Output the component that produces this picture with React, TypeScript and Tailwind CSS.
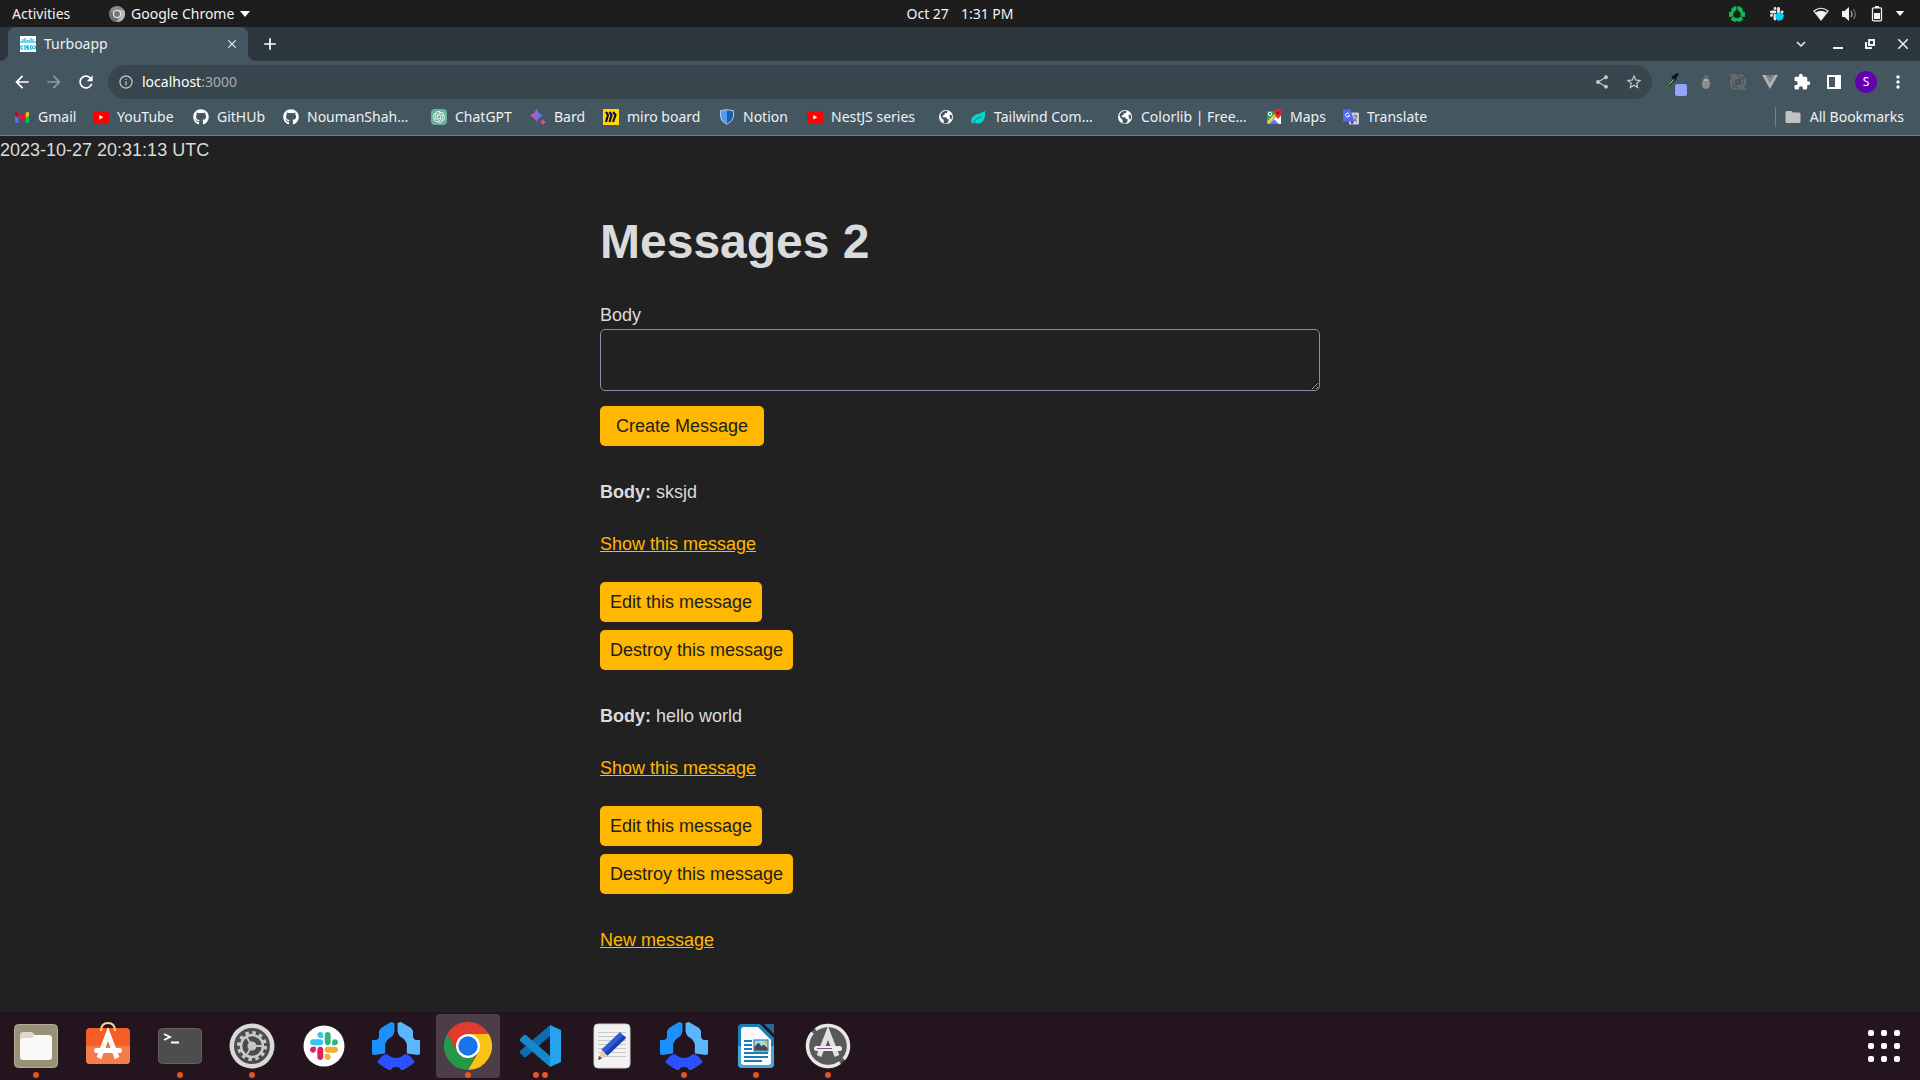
import React from "react";
import { FaGithub } from "react-icons/fa";
import { SiOpenai } from "react-icons/si";
import { MdArrowBack, MdArrowForward, MdRefresh, MdClose, MdAdd, MdShare, MdStarBorder, MdExtension, MdMoreVert, MdKeyboardArrowDown, MdOutlineInfo, MdFolder } from "react-icons/md";

type P = { className?: string };

const SLACK = [
  ["#36C5F0", "M45.2 25.8c-7.1 0-12.9-5.8-12.9-12.9S38.1 0 45.2 0s12.9 5.8 12.9 12.9v12.9H45.2zM45.2 32.3c7.1 0 12.9 5.8 12.9 12.9s-5.8 12.9-12.9 12.9H12.9C5.8 58.1 0 52.3 0 45.2s5.8-12.9 12.9-12.9h32.3z"],
  ["#2EB67D", "M97 45.2c0-7.1 5.8-12.9 12.9-12.9s12.9 5.8 12.9 12.9-5.8 12.9-12.9 12.9H97V45.2zM90.5 45.2c0 7.1-5.8 12.9-12.9 12.9s-12.9-5.8-12.9-12.9V12.9C64.7 5.8 70.5 0 77.6 0s12.9 5.8 12.9 12.9v32.3z"],
  ["#ECB22E", "M77.6 97c7.1 0 12.9 5.8 12.9 12.9s-5.8 12.9-12.9 12.9-12.9-5.8-12.9-12.9V97h12.9zM77.6 90.5c-7.1 0-12.9-5.8-12.9-12.9s5.8-12.9 12.9-12.9h32.3c7.1 0 12.9 5.8 12.9 12.9s-5.8 12.9-12.9 12.9H77.6z"],
  ["#E01E5A", "M25.8 77.6c0 7.1-5.8 12.9-12.9 12.9S0 84.7 0 77.6s5.8-12.9 12.9-12.9h12.9v12.9zM32.3 77.6c0-7.1 5.8-12.9 12.9-12.9s12.9 5.8 12.9 12.9v32.3c0 7.1-5.8 12.9-12.9 12.9s-12.9-5.8-12.9-12.9V77.6z"],
];

function HubRing({ className, colors }: P & { colors: [string, string, string] }) {
  return (
    <svg viewBox="0 0 48 48" className={className}>
      <path fill={colors[0]} d="M19 0l3.500 1v8q-.5 4-2.500 5.500a12 12 0 0 0-7 9q.5 5 0 8L2 33l-2-1V18h4q3-1 3-4V9l2-3z" />
      <path fill={colors[1]} d="M29 0l-3.500 1v8q.5 4 2.500 5.500a12 12 0 0 1 7 9q-.5 5 0 8L46 33l2-1V18h-4q-3-1-3-4V9l-2-3z" />
      <path fill={colors[2]} d="M5 40l5-6 4-2q2 0 3 1.500a11 11 0 0 0 14 0q1-1.500 3-1.500l4 2 5 6-5 4-7 4h-2q-1-3-5-3t-5 3h-2l-7-4z" />
    </svg>
  );
}

const Gmail = ({ className }: P) => (
  <svg viewBox="0 0 16 16" className={className}>
    <path fill="#5c6cf5" d="M1 5l3.500 2.500V14H2a1 1 0 0 1-1-1z" />
    <path fill="#16b364" d="M15 5l-3.500 2.500V14H14a1 1 0 0 0 1-1z" />
    <path fill="#fbbc04" d="M11.500 4.500L13 3a1.300 1.300 0 0 1 2 1v2.500L11.500 9z" />
    <path fill="#b3131f" d="M1 4a1.300 1.300 0 0 1 2-1l1.500 1.500V9L1 6.500z" />
    <path fill="#f0142f" d="M4.500 4.300L8 7l3.500-2.700V9L8 11.500 4.500 9z" />
  </svg>
);
const YouTube = ({ className }: P) => (
  <svg viewBox="0 0 16 16" className={className}>
    <rect y="2.500" width="16" height="11.500" rx="2" fill="#f00" />
    <path fill="#fff" d="M6.300 6v4.500l4-2.250z" />
  </svg>
);
const ChatGpt = ({ className }: P) => (
  <span className={`${className} flex items-center justify-center rounded-sm bg-[#6fb09d]`}>
    <SiOpenai className="size-3 text-white" />
  </span>
);
const Bard = ({ className }: P) => (
  <svg viewBox="0 0 16 16" className={className}>
    <defs>
      <linearGradient id="bard" x1="0" x2="1">
        <stop offset="0" stopColor="#f0574f" /><stop offset=".35" stopColor="#a55fd0" /><stop offset="1" stopColor="#2f8bf0" />
      </linearGradient>
    </defs>
    <path fill="url(#bard)" d="M6.500 0Q8.500 4.500 13 6.500 8.500 8.500 6.500 13 4.500 8.500 0 6.500 4.500 4.500 6.500 0z" />
    <path fill="#d9518c" d="M13 10q.8 2.200 3 3-2.200.8-3 3-.8-2.200-3-3 2.200-.8 3-3z" />
  </svg>
);
const Miro = ({ className }: P) => (
  <svg viewBox="0 0 16 16" className={className}>
    <rect width="16" height="16" fill="#ffd900" />
    <path fill="none" stroke="#120838" strokeWidth="2.200" d="M3 3l2 3-2 7M6.500 3l2 3-2 7M10 3l2.500 3-2.500 7" />
  </svg>
);
const Shield = ({ className }: P) => (
  <svg viewBox="0 0 16 16" className={className}>
    <path fill="#4f9cf0" d="M8 .5L1 1.500v6q.5 5 7 8z" />
    <path fill="#1f5fa8" d="M8 .5l7 1v6q-.5 5-7 8z" />
    <path fill="none" stroke="#b9cbdc" d="M8 .7l6.500 1v6q-.5 4.500-6.500 7.500-6-3-6.500-7.500v-6z" />
  </svg>
);
const Globe = ({ className }: P) => (
  <svg viewBox="0 0 16 16" className={className}>
    <circle cx="8" cy="8" r="7" fill="#fff" />
    <path fill="#44555f" d="M2.500 6.500q0-2.500 3-4 2-1 4-.6l-.5 2-2.500.6v1.600l-2 .6.500 1.500h2.500q1.500.2 1.500 1.800h1.500v2.500l-2 2q-2 .2-2.800-.5v-3L3.500 9zM11.500 5.500l2.300.7q.6 2-.3 4.300l-1.500-.8z" />
  </svg>
);
const Leaf = ({ className }: P) => (
  <svg viewBox="0 0 16 16" className={className}>
    <path fill="#06d6d0" d="M15 2q1 12-7 12.500-2 .2-4-1L2.500 15l-1-1Q0 8 6 5.500 11 4.500 15 2z" />
    <path fill="none" stroke="#34706f" d="M2.500 14Q6 9.500 11 7.500" />
  </svg>
);
const Maps = ({ className }: P) => (
  <svg viewBox="0 0 16 16" className={className}>
    <rect x="1" y="2" width="14" height="13" rx="1" fill="#1ea560" />
    <path fill="#fff" d="M2 15L12.500 5 15 7v8z" />
    <path fill="#5b7cfa" d="M3 15l5-5 5 5z" />
    <path fill="#ffd23e" d="M1 12.500l9-9 1.500 1.500L2 14.500z" />
    <circle cx="4" cy="5" r="1.700" fill="none" stroke="#fff" />
    <path fill="#e8262d" d="M12 0a3.700 3.700 0 0 1 3.700 3.700Q15.500 6 12 10 8.500 6 8.300 3.700A3.700 3.700 0 0 1 12 0z" />
    <circle cx="12" cy="3.700" r="1.300" fill="#8c1015" />
  </svg>
);
const Translate = ({ className }: P) => (
  <svg viewBox="0 0 16 16" className={className}>
    <rect x="6" y="3.500" width="10" height="12" rx="1" fill="#c9ced4" />
    <path fill="none" stroke="#68737d" d="M9.500 7h5M12 6v1M10.500 12.500q3-2 3-5.500M10.500 9q1 2.500 3.500 3.500" />
    <path fill="#5468f5" d="M1 .5h6.500L11 12.500H1a1 1 0 0 1-1-1v-10a1 1 0 0 1 1-1z" />
    <path fill="#3b16c4" d="M7.500 12.500H11L9 15.500z" />
    <path fill="none" stroke="#fff" d="M6 4.700A2 2 0 1 0 6.500 6.500H4.800" />
  </svg>
);
const GitHub = ({ className }: P) => <FaGithub className={`${className} text-white`} />;

const bookmarks: { label: string; icon: React.FC<P>; width: string }[] = [
  { label: "Gmail", icon: Gmail, width: "w-[79px]" },
  { label: "YouTube", icon: YouTube, width: "w-[100px]" },
  { label: "GitHUb", icon: GitHub, width: "w-[90px]" },
  { label: "NoumanShah…", icon: GitHub, width: "w-[148px]" },
  { label: "ChatGPT", icon: ChatGpt, width: "w-[99px]" },
  { label: "Bard", icon: Bard, width: "w-[73px]" },
  { label: "miro board", icon: Miro, width: "w-[116px]" },
  { label: "Notion", icon: Shield, width: "w-[88px]" },
  { label: "NestJS series", icon: YouTube, width: "w-[131px]" },
  { label: "", icon: Globe, width: "w-8" },
  { label: "Tailwind Com…", icon: Leaf, width: "w-[147px]" },
  { label: "Colorlib | Free…", icon: Globe, width: "w-[149px]" },
  { label: "Maps", icon: Maps, width: "w-[77px]" },
  { label: "Translate", icon: Translate, width: "w-[104px]" },
];

function TopBar() {
  return (
    <header className="grid h-[27px] shrink-0 grid-cols-[1fr_auto_1fr] items-center bg-[#1d1d1d] px-3 text-sm text-[#f2f2f2]">
      <div className="flex items-center">
        <button className="w-[97px] text-left">Activities</button>
        <button className="flex items-center gap-1.5">
          <svg viewBox="0 0 16 16" className="size-4">
            <circle cx="8" cy="8" r="8" fill="#8c8c8c" />
            <path fill="#b8b8b8" d="M8 4h7a8 8 0 0 1-7 12l4-6z" />
            <path fill="#6f6f6f" d="M1.500 4.500L5 10l3.500 2L7 16A8 8 0 0 1 1.500 4.500z" />
            <circle cx="8" cy="8" r="4" fill="#eee" />
            <circle cx="8" cy="8" r="3" fill="#777" />
          </svg>
          Google Chrome
          <svg viewBox="0 0 10 6" className="h-1.5 w-2.5"><path fill="#fff" d="M0 0h10L5 6z" /></svg>
        </button>
      </div>
      <div className="flex gap-3"><span>Oct 27</span><span>1:31 PM</span></div>
      <div className="flex items-center justify-end">
        <HubRing className="mr-6 size-4" colors={["#12b84f", "#12b84f", "#12b84f"]} />
        <svg viewBox="0 0 16 16" className="mr-7 size-4">
          <g transform="translate(1 1) scale(.11)">{SLACK.map(([c, d]) => <path key={c} fill="#e8e8e8" d={d} />)}</g>
          <circle cx="10.500" cy="10.500" r="4" fill="#00d0f5" />
        </svg>
        <svg viewBox="0 0 16 16" className="mr-3 size-4">
          <path fill="none" stroke="#eee" strokeWidth="1.200" d="M1 5q7-5.500 14 0L8 14z" />
          <path fill="#f2f2f2" d="M2.500 6.500q5.500-3.500 11 0L8 14z" />
        </svg>
        <svg viewBox="0 0 16 16" className="mr-3.5 size-4">
          <path fill="#f2f2f2" d="M1 5h2.500L8 1v14l-4.500-4H1z" />
          <path fill="none" stroke="#aaa" strokeWidth="1.200" d="M10 5q2 3 0 6" />
          <path fill="none" stroke="#777" strokeWidth="1.200" d="M12.500 3q3.500 5 0 10" />
        </svg>
        <svg viewBox="0 0 12 16" className="mr-3 h-4 w-3">
          <path fill="#f2f2f2" d="M4 0h4v2H4zM3 7h6v6H3z" />
          <rect x="1.500" y="1.800" width="9" height="13" rx="1" fill="none" stroke="#f2f2f2" strokeWidth="1.300" />
        </svg>
        <svg viewBox="0 0 10 6" className="mr-[3px] h-[5px] w-2.5"><path fill="#fff" d="M0 0h10L5 6z" /></svg>
      </div>
    </header>
  );
}

function TabStrip() {
  return (
    <div className="flex h-[34px] shrink-0 items-center bg-[#2b373d] text-[#eef1f2]">
      <span className="size-2 self-end bg-[#445761]"><span className="block size-2 rounded-br-lg bg-[#2b373d]" /></span>
      <div className="flex h-full w-60 items-center rounded-t-lg bg-[#445761] pr-2 pl-3 text-sm">
        <svg viewBox="0 0 16 16" className="mr-2 size-4">
          <rect width="16" height="16" fill="#fff" />
          <path stroke="#19b5e0" strokeWidth="1.200" d="M1 5v2M3 3v4M5 2v5M7 4v3M9 4v3M11 2v5M13 3v4M15 5v2" />
          <path fill="none" stroke="#19b5e0" strokeWidth="1.300" d="M3.200 9.800H2q-1.200 0-1.200 1.700T2 13.200h1.200M5 9v5M9 9.800H7.500q-1 0-1 .9t1 .8q1.200 0 1.200.9t-1 .8H6.500M12 9.800h-.6q-1 0-1 1.700t1 1.700h.6" />
          <circle cx="14" cy="11.500" r="1.500" fill="none" stroke="#19b5e0" strokeWidth="1.200" />
        </svg>
        <span className="flex-1">Turboapp</span>
        <button aria-label="Close tab" className="flex size-4 items-center justify-center"><MdClose className="size-3.5" /></button>
      </div>
      <span className="size-2 self-end bg-[#445761]"><span className="block size-2 rounded-bl-lg bg-[#2b373d]" /></span>
      <button aria-label="New tab" className="ml-1 text-white"><MdAdd className="size-5" /></button>
      <div className="ml-auto flex items-center gap-4 pr-2">
        <button aria-label="Search tabs" className="mr-1"><MdKeyboardArrowDown className="size-[18px]" /></button>
        <button aria-label="Minimize">
          <svg viewBox="0 0 16 16" className="size-4"><path fill="currentColor" d="M3 11h10v2H3z" /></svg>
        </button>
        <button aria-label="Restore">
          <svg viewBox="0 0 16 16" className="size-4"><path fill="none" stroke="currentColor" strokeWidth="2" d="M7 4h5v5H7zM4 6v6h6" /></svg>
        </button>
        <button aria-label="Close"><MdClose className="size-[18px]" /></button>
      </div>
    </div>
  );
}

const tool = "flex w-8 items-center justify-center";

function Toolbar() {
  return (
    <div className="flex h-[42px] shrink-0 items-center bg-[#445761] pr-1.5 pl-1.5 text-white">
      <div className="flex items-center">
        <button aria-label="Back" className={tool}><MdArrowBack className="size-5" /></button>
        <button aria-label="Forward" className={`${tool} text-[#8e9aa1]`}><MdArrowForward className="size-5" /></button>
        <button aria-label="Reload" className={tool}><MdRefresh className="size-5" /></button>
      </div>
      <div className="ml-1.5 flex h-[34px] flex-1 items-center rounded-full bg-[#38464d] pr-0.5 pl-2.5 text-sm">
        <MdOutlineInfo className="mr-2 size-4 text-[#b9c0c4]" />
        <button className="flex-1 text-left">localhost<span className="text-[#a4acb0]">:3000</span></button>
        <button aria-label="Share" className={`${tool} text-[#c3c8cb]`}><MdShare className="size-4" /></button>
        <button aria-label="Bookmark this tab" className={`${tool} text-[#c3c8cb]`}><MdStarBorder className="size-[18px]" /></button>
      </div>
      <div className="ml-1.5 flex items-center">
        <button aria-label="Color picker" className={tool}>
          <svg viewBox="0 0 20 20" className="size-5 overflow-visible">
            <path stroke="#10201a" strokeWidth="2.500" d="M8 4l4 4" />
            <path stroke="#111" strokeWidth="3" d="M10 6l3-3.500" strokeLinecap="round" />
            <path stroke="#1a3326" strokeWidth="2.500" d="M3 15l7-8" />
            <path stroke="#c9ddd2" strokeWidth="1" d="M5.500 12l4-4.500" />
            <path stroke="#14a04c" strokeWidth="1.500" d="M2.500 15.500l3-3.500" />
            <rect x="11" y="12" width="12" height="12" rx="2" fill="#93a5fb" />
          </svg>
        </button>
        <button aria-label="Bug reporter" className={tool}>
          <svg viewBox="0 0 20 20" className="size-5">
            <path fill="none" stroke="#5f6668" d="M5 7l10 8M15 7L5 15M4 11h12" />
            <ellipse cx="10" cy="5.500" rx="2.500" ry="2.500" fill="#6c6c6c" />
            <ellipse cx="10" cy="12" rx="4" ry="5" fill="#8e8e8e" />
            <path stroke="#bbb" strokeWidth="1.500" d="M7.500 8h5" />
          </svg>
        </button>
        <button aria-label="Refresh tools" className={tool}>
          <svg viewBox="0 0 20 20" className="size-5" fill="none" stroke="#6a6c6d" strokeWidth="2">
            <circle cx="10" cy="10" r="1.500" fill="#555" stroke="none" />
            <path strokeWidth="1.500" d="M6.500 12.500A4.300 4.300 0 0 1 12.500 6.500M13.500 7.500A4.300 4.300 0 0 1 7.500 13.500" />
            <path d="M4 14.500Q1 8 6 5L4 3.500h4.500V7M16 5.500Q19 12 14 15l2 1.500h-4.500V13M11 3q3 0 4.500 1.500M9 17q-3 0-4.500-1.500" />
          </svg>
        </button>
        <button aria-label="Vue devtools" className={tool}>
          <svg viewBox="0 0 20 20" className="size-5">
            <path fill="#b0b0b0" d="M2 3h4l4 7 4-7h4l-8 14z" /><path fill="#858585" d="M5.500 3H9l1 2 1-2h3.500L10 11z" />
          </svg>
        </button>
        <button aria-label="Extensions" className={tool}><MdExtension className="size-[18px]" /></button>
        <button aria-label="Side panel" className={tool}>
          <svg viewBox="0 0 16 16" className="size-4"><path fill="#fff" fillRule="evenodd" d="M1 1h14v14H1zM3 3v10h6V3z" /></svg>
        </button>
        <button className={tool} aria-label="Profile">
          <span className="flex size-[22px] items-center justify-center rounded-full bg-[#6200b0] text-xs">S</span>
        </button>
        <button aria-label="Menu" className={tool}><MdMoreVert className="size-5" /></button>
      </div>
    </div>
  );
}

function BookmarksBar() {
  return (
    <nav className="flex h-[33px] shrink-0 items-center border-b border-[#6d7d85] bg-[#445761] pb-1 pl-[14px] text-sm text-[#eef1f2]">
      {bookmarks.map(({ label, icon: Icon, width }, i) => (
        <a key={i} href="#" aria-label={label || "Website"} className={`${width} flex shrink-0 items-center gap-2 whitespace-nowrap`}>
          <Icon className="size-4 shrink-0" />
          {label}
        </a>
      ))}
      <a href="#" className="ml-auto flex items-center gap-2 pr-4">
        <span className="h-5 w-px bg-[#72818a]" />
        <MdFolder className="size-[18px] text-[#c2c2c2]" />
        All Bookmarks
      </a>
    </nav>
  );
}

const btn = "block h-10 rounded-[5px] bg-[#ffb700] text-[#212121]";
const link = "text-[#ffb700] underline";

function Message({ body }: { body: string }) {
  return (
    <article className="mb-8">
      <p className="mb-6"><strong>Body:</strong> {body}</p>
      <p className="mb-6"><a href="#" className={link}>Show this message</a></p>
      <button className={`${btn} mb-2 px-2.5`}>Edit this message</button>
      <button className={`${btn} px-2.5`}>Destroy this message</button>
    </article>
  );
}

function Page() {
  return (
    <main className="flex-1 bg-[#212121] font-['Liberation_Sans',Arial,sans-serif] text-lg/7 text-[#dbdbdb]">
      <p>2023-10-27 20:31:13 UTC</p>
      <div className="mx-auto mt-[50px] max-w-[720px]">
        <h1 className="mb-[31px] text-5xl/[56px] font-bold">Messages 2</h1>
        <form className="mb-8" onSubmit={(e) => e.preventDefault()}>
          <label htmlFor="body" className="block">Body</label>
          <textarea id="body" className="mb-[15px] block h-[62px] w-full resize rounded-[5px] border border-[#8d8aa5] bg-transparent px-2 py-1" />
          <button className={`${btn} px-4`}>Create Message</button>
        </form>
        <Message body="sksjd" />
        <Message body="hello world" />
        <a href="#" className={link}>New message</a>
      </div>
    </main>
  );
}

const Files = () => (
  <svg viewBox="0 0 48 48" className="size-12">
    <rect x="2.500" y="2.500" width="43" height="43" rx="4" fill="#989077" stroke="#b5ae99" />
    <path fill="#ddd8ca" d="M8 13q0-3 3-3h9l4 4v6H8z" />
    <path fill="#faf9f7" d="M8 19q0-3 3-3h9l3-3h14q3 0 3 3v19q0 3-3 3H11q-3 0-3-3z" />
  </svg>
);
const Software = () => (
  <svg viewBox="0 0 48 48" className="size-12">
    <rect x="2" y="6" width="44" height="36" rx="4" fill="#f45f27" />
    <path fill="#f77c4c" d="M2 24h44v14q0 4-4 4H6q-4 0-4-4z" />
    <path fill="none" stroke="#f5d5a0" strokeWidth="2" d="M17 9q0-8 7-8t7 8" />
    <path fill="none" stroke="#fff" strokeWidth="5" d="M15 36l9-24 9 24" />
    <rect x="10" y="26" width="28" height="5" rx="2.500" fill="#fff" />
  </svg>
);
const Terminal = () => (
  <svg viewBox="0 0 48 48" className="size-12">
    <rect x="2.500" y="6.500" width="43" height="35" rx="4" fill="#4d4d4d" stroke="#626262" />
    <path fill="none" stroke="#fff" strokeWidth="1.800" d="M8 12l6 3-6 3M15 20.500h8" />
  </svg>
);
const Settings = () => (
  <svg viewBox="0 0 48 48" className="size-12">
    <circle cx="24" cy="24" r="22.500" fill="#d9d9d9" />
    <circle cx="24" cy="24" r="18" fill="#4c4c4c" />
    <circle cx="24" cy="24" r="13.500" fill="none" stroke="#ccc" strokeWidth="3" strokeDasharray="3.500 3.568" />
    <circle cx="24" cy="24" r="11" fill="none" stroke="#ccc" strokeWidth="2.500" />
    <circle cx="24" cy="24" r="4.500" fill="#c6c6c6" />
    <path stroke="#c6c6c6" strokeWidth="2" d="M24 24h10M24 24l-5.500-9M24 24l-5.500 9" />
  </svg>
);
const Slack = () => (
  <svg viewBox="0 0 48 48" className="size-12">
    <circle cx="24" cy="24" r="20.500" fill="#fff" />
    <g transform="translate(10 10) scale(.228)">{SLACK.map(([c, d]) => <path key={c} fill={c} d={d} />)}</g>
  </svg>
);
const Hub = () => <HubRing className="size-12" colors={["#1d90ff", "#5cb5ff", "#2b50ff"]} />;
const Chrome = () => (
  <svg viewBox="0 0 48 48" className="size-12">
    <path fill="#e33b2e" d="M3.200 12A24 24 0 0 1 44.800 12H24L13.600 30z" />
    <path fill="#fbc116" d="M44.800 12A24 24 0 0 1 24 48l10.400-18L24 12z" />
    <path fill="#279847" d="M24 48A24 24 0 0 1 3.200 12l10.400 18L24 36l7-1z" />
    <circle cx="24" cy="24" r="12" fill="#fff" />
    <circle cx="24" cy="24" r="9.700" fill="#1a73e8" />
  </svg>
);
const Code = () => (
  <svg viewBox="0 0 48 48" className="size-12">
    <path fill="#0f6cad" d="M34 3v11L10 35q-1 .7-2 0l-4-4q-.8-1 0-2z" />
    <path fill="#1488cc" d="M34 45V34L10 13q-1-.7-2 0l-4 4q-.8 1 0 2z" />
    <path fill="#25a3ee" d="M34 3l11 5v32l-11 5z" />
  </svg>
);
const Editor = () => (
  <svg viewBox="0 0 48 48" className="size-12">
    <rect x="6" y="2" width="36" height="44" rx="4" fill="#f2f2f2" stroke="#cfcfcf" />
    <path stroke="#c8c8c8" d="M10 10.500h28M10 14.500h28M10 18.500h28M10 22.500h28M10 26.500h28M10 30.500h28M10 34.500h28" />
    <path fill="#f0c9a5" d="M10 38l3.500-10.500 6 6z" />
    <path fill="#444" d="M10 38l1.300-4 2.500 2.500z" />
    <path fill="#2b5bd7" d="M13.500 27.500L32 10l6 6-18.500 17.500z" />
    <path fill="#1c3fa8" d="M17 31L35.500 13.500 38 16 19.500 33.500z" />
  </svg>
);
const Writer = () => (
  <svg viewBox="0 0 48 48" className="size-12">
    <path fill="#1b7fb5" d="M10 2h18l14 14v26q0 4-4 4H10q-4 0-4-4V6q0-4 4-4z" />
    <path fill="#4aa5d3" d="M6 24h36v18q0 4-4 4H10q-4 0-4-4z" />
    <path fill="#1c6e9c" d="M32 2h10v10z" />
    <path fill="#fafafa" d="M12 5h14l13 13v22q0 3-3 3H12q-3 0-3-3V8q0-3 3-3z" />
    <path stroke="#1a7db6" strokeWidth="2" d="M12 19h8M12 23h8M12 27h8M12 31h24M12 35h24M12 39h18" />
    <rect x="22" y="18" width="14" height="11" fill="#a8daf5" stroke="#1a6b9c" />
    <path fill="#4a4a4a" d="M22.500 28.500v-4l4-4 3 4 2-2 4 3.500v2.500z" />
    <circle cx="34" cy="20.500" r="1.500" fill="#f5b800" />
  </svg>
);
const Updater = () => (
  <svg viewBox="0 0 48 48" className="size-12">
    <circle cx="24" cy="24" r="22" fill="#595959" />
    <g transform="rotate(-135 24 24)">
      <circle cx="24" cy="24" r="20.500" fill="none" stroke="#e8e8e8" strokeWidth="3.500" strokeDasharray="59 5.400" strokeDashoffset="-3" />
    </g>
    <path fill="none" stroke="#e2e2e2" strokeWidth="5" d="M15 34l9-23 9 23" />
    <rect x="10" y="24" width="28" height="5" rx="2.500" fill="#eee" />
    <path stroke="#92478c" d="M13 26.500h15" />
  </svg>
);

const apps: { name: string; icon: React.FC; dots: number; active?: boolean }[] = [
  { name: "Files", icon: Files, dots: 1 },
  { name: "Software", icon: Software, dots: 0 },
  { name: "Terminal", icon: Terminal, dots: 1 },
  { name: "Settings", icon: Settings, dots: 1 },
  { name: "Slack", icon: Slack, dots: 0 },
  { name: "Hubstaff", icon: Hub, dots: 0 },
  { name: "Chrome", icon: Chrome, dots: 1, active: true },
  { name: "Code", icon: Code, dots: 2 },
  { name: "Text Editor", icon: Editor, dots: 0 },
  { name: "Hubstaff Client", icon: Hub, dots: 1 },
  { name: "Writer", icon: Writer, dots: 1 },
  { name: "Software Updater", icon: Updater, dots: 1 },
];

function Dock() {
  return (
    <footer className="flex h-[68px] shrink-0 items-center gap-2 bg-[#23141e] px-1">
      {apps.map(({ name, icon: Icon, dots, active }) => (
        <button key={name} aria-label={name} className={`${active ? "bg-[#4b3e47]" : ""} flex size-16 flex-col items-center rounded pt-2`}>
          <Icon />
          <span className="flex gap-[3px] pt-0.5">
            {Array.from({ length: dots }, (_, i) => <span key={i} className="size-1.5 rounded-full bg-[#e95420]" />)}
          </span>
        </button>
      ))}
      <button aria-label="Show applications" className="ml-auto grid size-16 grid-cols-[repeat(3,6px)] place-content-center gap-[7px]">
        {Array.from({ length: 9 }, (_, i) => <span key={i} className="size-1.5 rounded-[2px] bg-white" />)}
      </button>
    </footer>
  );
}

export default function App() {
  return (
    <div className="flex min-h-screen flex-col bg-[#212121] font-['Noto_Sans',sans-serif]">
      <TopBar />
      <TabStrip />
      <Toolbar />
      <BookmarksBar />
      <Page />
      <Dock />
    </div>
  );
}
